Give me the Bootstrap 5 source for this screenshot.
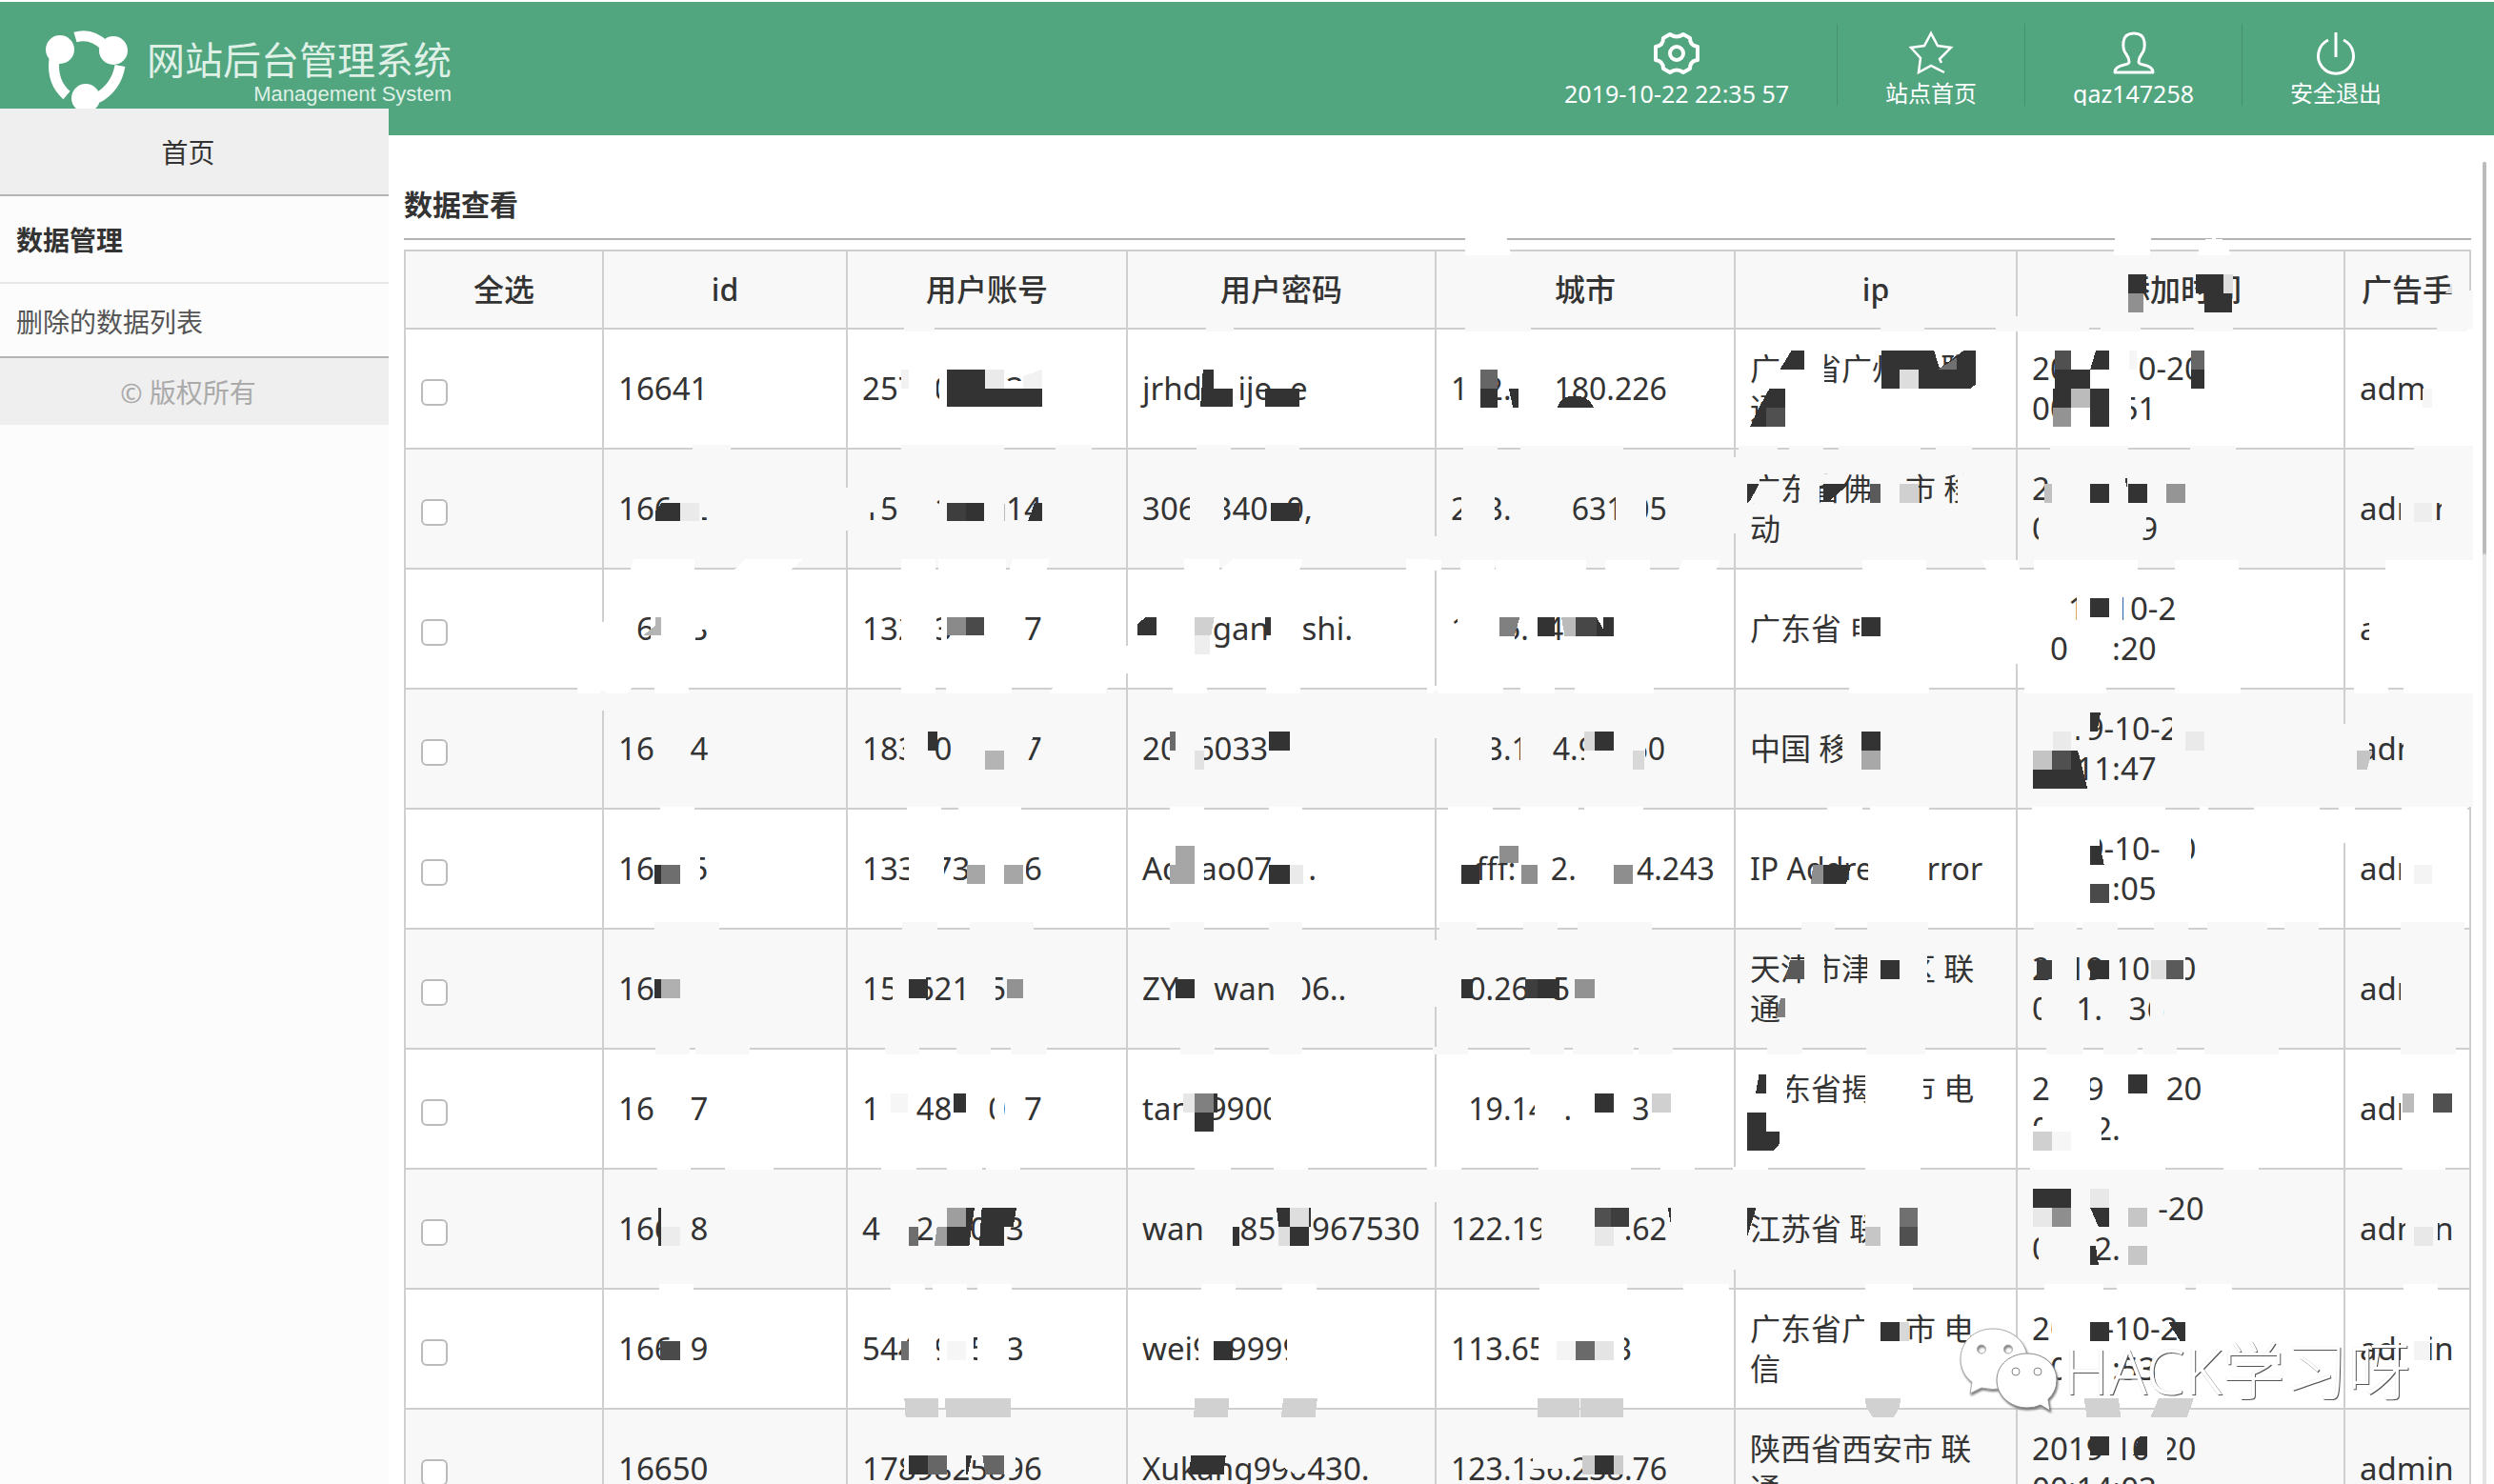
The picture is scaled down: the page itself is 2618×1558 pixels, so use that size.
<!DOCTYPE html>
<html lang="zh-CN">
<head>
<meta charset="utf-8">
<meta name="viewport" content="width=device-width, initial-scale=1">
<title>网站后台管理系统</title>
<link href="https://cdn.jsdelivr.net/npm/bootstrap@5.3.0/dist/css/bootstrap.min.css" rel="stylesheet">
<style>
body{font-family:"Noto Sans","Noto Sans CJK SC",sans-serif;color:#333;background:#fff}
a{color:inherit;text-decoration:none}
.topbar{height:142px;border-top:2px solid #fff;background:#51a57f;color:#fff;padding-right:68px}
.brand-area{padding-left:46px}
.brand-mark{width:90px;height:90px;margin-top:27px}
.brand-words{margin-top:33px;margin-left:18px;color:#dff0e7;text-align:right}
.brand-cn{font-size:40px;line-height:56px;font-weight:400}
.brand-en{font:22px/16px "Liberation Sans",sans-serif}
.tool-item{height:86px;margin-top:23px;padding:0 50px;border-right:1px solid #46916f;font-size:24px;line-height:32px;overflow:hidden}
.tool-item:last-child{border-right:0}
.tool-latin{font-size:25px}
.tool-item svg{width:48px;height:48px;margin:7px 0 2px;flex-shrink:0;fill:none;stroke:#fff;stroke-width:3}
.sidebar{width:408px;margin-top:-28px;background:#fcfcfc;z-index:2;font-size:28px}
.sidebar a,.copy-note{display:block;padding:0 17px}
.nav-home{height:92px;line-height:92px;background:#efefef;border-bottom:2px solid #b3b3b3;text-align:center;padding-right:30px!important}
.nav-group{height:92px;line-height:92px;border-bottom:2px solid #e8e8e8;font-weight:700}
.nav-sub{height:78px;line-height:80px;border-bottom:2px solid #b3b3b3;color:#555}
.copy-note{height:70px;line-height:72px;background:#efefef;color:#aaa;text-align:center;padding-right:30px!important}
.content-area{padding:28px 8px 0 16px}
.main-panel{padding-right:12px}
.panel-title{font-size:30px;line-height:90px;height:82px;margin:0;border-bottom:2px solid #b3b3b3;font-weight:700}
.records{width:100%;margin-top:10px;table-layout:fixed;border-collapse:separate;border-spacing:0;border:solid #cfcfcf;border-width:2px 0 0 2px;font-size:33px;line-height:42px}
.records th,.records td{border:solid #cfcfcf;border-width:0 2px 2px 0;padding:0 14px 0 15px;white-space:nowrap}
.records th{height:82px;text-align:center;font-size:32px;font-weight:500;background:#f8f8f8;padding:0 15px}
.records th:last-child{padding:0}
.records td{height:126px}
.records td:nth-child(5){font-size:32px}
.records td:nth-child(6){white-space:normal;font-size:32px;padding-right:24px}
.records tbody tr:nth-child(even){background:#f8f8f8}
.records input{appearance:none;display:block;width:28px;height:28px;margin:8px 0 0 1px;border:2px solid #bbb;border-radius:6px;background:#fff}
.scroll-rail{width:4px;background:#e4e4e4}
.scroll-grip{height:412px;background:#bbb;border-radius:2px}
.mosaic{position:absolute;left:0;top:0;width:2194px;height:1388px;pointer-events:none;shape-rendering:crispEdges}
.mosaic .w{fill:#fff}.mosaic .s{fill:#f8f8f8}.mosaic .k{fill:#333}.mosaic .l{fill:#d1d1d1}
.wm{position:absolute;left:1632px;top:1222px;gap:2px;font-size:66px;line-height:80px;font-weight:300;color:#fff;text-shadow:1px 1px 0 #555,0 0 1px #ccc;white-space:nowrap;pointer-events:none}
.wm svg{width:108px;height:92px;filter:drop-shadow(1px 2px 1px #777)}
</style>
<script src="https://cdn.jsdelivr.net/npm/bootstrap@5.3.0/dist/js/bootstrap.bundle.min.js"></script>
</head>
<body>
<div class="vh-100 d-flex flex-column overflow-hidden">
<header class="topbar d-flex justify-content-between flex-shrink-0">
  <a href="#" class="brand-area d-flex">
    <svg class="brand-mark" viewBox="46 29 90 90"><g fill="none" stroke="#fff" stroke-width="11"><path d="M57 62Q54 86 70 100"/><path d="M79 39Q96 34 110 48"/><path d="M126 69Q122 92 102 103"/></g><g fill="#fff"><circle cx="63" cy="52" r="15"/><circle cx="119" cy="53" r="15"/><circle cx="90" cy="103" r="15"/></g></svg>
    <span class="brand-words"><span class="brand-cn d-block">网站后台管理系统</span><span class="brand-en d-block">Management System</span></span>
  </a>
  <nav class="d-flex">
    <a href="#" class="tool-item tool-latin d-flex flex-column align-items-center"><svg viewBox="0 0 48 48"><path d="M17 4q7 5 14 0l7 4q0 8 8 9v14q-8 1-8 9l-7 4q-7-5-14 0l-7-4q0-8-8-9V17q8-1 8-9z" stroke-width="4" stroke-linejoin="round"/><circle cx="24" cy="24" r="7" stroke-width="4"/></svg>2019-10-22 22:35 57</a>
    <a href="#" class="tool-item d-flex flex-column align-items-center"><svg viewBox="0 0 48 48"><path d="M35 34l-2-4 12-12-14-2-7-13-7 13-14 2 10 11-2 15 13-7 14 7" stroke-width="2.5"/></svg>站点首页</a>
    <a href="#" class="tool-item tool-latin d-flex flex-column align-items-center"><svg viewBox="0 0 48 48"><path d="M19 33q0-4-3-8-4-5-3-13 1-9 11-9t11 9q1 8-3 13-3 4-3 8 0 2 5 3 10 2 10 8H4q0-6 10-8 5-1 5-3z" stroke-linejoin="round"/></svg>qaz147258</a>
    <a href="#" class="tool-item d-flex flex-column align-items-center"><svg viewBox="0 0 48 48"><path d="M24 2v26M16 10a18.500 18.500 0 1 0 16 0"/></svg>安全退出</a>
  </nav>
</header>
<div class="d-flex flex-grow-1">
  <aside class="sidebar flex-shrink-0 position-relative">
    <a href="#" class="nav-home">首页</a>
    <a href="#" class="nav-group">数据管理</a>
    <a href="#" class="nav-sub">删除的数据列表</a>
    <div class="copy-note">© 版权所有</div>
  </aside>
  <div class="content-area d-flex flex-grow-1">
  <main class="main-panel flex-grow-1 position-relative">
    <h1 class="panel-title">数据查看</h1>
    <table class="records">
      <colgroup><col style="width:208px"><col style="width:256px"><col style="width:294px"><col style="width:324px"><col style="width:314px"><col style="width:296px"><col style="width:344px"><col style="width:132px"></colgroup>
      <thead><tr><th>全选</th><th>id</th><th>用户账号</th><th>用户密码</th><th>城市</th><th>ip</th><th>添加时间</th><th>广告手</th></tr></thead>
      <tbody>
      <tr><td><input type="checkbox" aria-label="16641"></td><td>16641</td><td>257&numsp;0&numsp;&numsp;&numsp;3</td><td>jrhd&numsp;&numsp;ije&numsp;e</td><td>1&numsp;2.&numsp;&numsp;&nbsp;180.226</td><td>广东省广州市 联通</td><td>20&numsp;&numsp;&nbsp;&nbsp;10-20<br>00&nbsp;&numsp;&numsp;&nbsp;51</td><td>adm</td></tr>
      <tr><td><input type="checkbox" aria-label="16642"></td><td>166&numsp;2</td><td>15&numsp;&numsp;1&numsp;&numsp;&numsp;14</td><td>306&numsp;340&numsp;0,</td><td>2&numsp;3.&numsp;&numsp;&numsp;&nbsp;631.05</td><td>广东省佛&nbsp;&numsp;&nbsp;市 移动</td><td>2<br>0&numsp;&numsp;&numsp;&numsp;&numsp;9</td><td>admin</td></tr>
      <tr><td><input type="checkbox" aria-label="16643"></td><td>16&numsp;&numsp;3</td><td>132&numsp;3&numsp;&numsp;&numsp;&numsp;7</td><td>&numsp;&numsp;&numsp;&nbsp;&nbsp;ganw&nbsp;shi.</td><td>1&numsp;&numsp;5.&numsp;4</td><td>广东省 电</td><td>&numsp;&numsp;1&numsp;&nbsp;10-2<br>&numsp;0&numsp;&numsp;&nbsp;:20</td><td>a</td></tr>
      <tr><td><input type="checkbox" aria-label="16644"></td><td>16&numsp;&numsp;4</td><td>183&numsp;0&numsp;&numsp;&numsp;&numsp;7</td><td>20&numsp;6033</td><td>&numsp;&numsp;3.1&nbsp;&nbsp;&nbsp;4.9&numsp;&numsp;60</td><td>中国 移</td><td>&numsp;&numsp;19-10-2<br>&numsp;&numsp;&nbsp;11:47</td><td>adm</td></tr>
      <tr><td><input type="checkbox" aria-label="16645"></td><td>16&numsp;&numsp;5</td><td>133&numsp;73&numsp;&numsp;&numsp;6</td><td>Ad&numsp;ao07&numsp;&numsp;.</td><td>&numsp;&nbsp;fff:&numsp;&numsp;2.&numsp;&numsp;&numsp;&nbsp;4.243</td><td>IP Address Error</td><td>&numsp;&numsp;&numsp;9-10-&numsp;0<br>&numsp;&numsp;&numsp;&numsp;&nbsp;:05</td><td>adm</td></tr>
      <tr><td><input type="checkbox" aria-label="16646"></td><td>16</td><td>15&numsp;621&numsp;5</td><td>ZY&numsp;&numsp;wan&numsp;06..</td><td>&numsp;0.26&nbsp;&nbsp;&nbsp;5</td><td>天津市津&nbsp;&numsp;&nbsp;区 联通</td><td>2019-10-20<br>0&numsp;&nbsp;1.&numsp;&nbsp;36</td><td>adm</td></tr>
      <tr><td><input type="checkbox" aria-label="16647"></td><td>16&numsp;&numsp;7</td><td>1&numsp;&numsp;48&numsp;&numsp;0&numsp;7</td><td>tan&numsp;9900</td><td>119.14&numsp;.&numsp;&numsp;&numsp;&nbsp;3</td><td>广东省揭&nbsp;&numsp;&nbsp;市 电<br>&nbsp;</td><td>2&numsp;&numsp;9&numsp;&numsp;&numsp;&nbsp;20<br>0&numsp;&numsp;&nbsp;2.</td><td>adm</td></tr>
      <tr><td><input type="checkbox" aria-label="16648"></td><td>166&numsp;8</td><td>4&numsp;&numsp;2&numsp;&numsp;0&numsp;3</td><td>wan&numsp;&numsp;85&numsp;&numsp;967530</td><td>122.19&numsp;&numsp;&numsp;&numsp;&nbsp;.62</td><td>江苏省 联</td><td>&numsp;&numsp;&numsp;&numsp;&numsp;&numsp;&numsp;-20<br>0&numsp;&numsp;&nbsp;2.</td><td>admin</td></tr>
      <tr><td><input type="checkbox" aria-label="16649"></td><td>166&numsp;9</td><td>544&numsp;9&numsp;5&numsp;3</td><td>wei9&numsp;9999</td><td>113.65&numsp;&numsp;&numsp;&nbsp;&nbsp;3</td><td>广东省广&nbsp;&numsp;&nbsp;市 电信</td><td>20&numsp;&numsp;-10-2<br>00&numsp;&numsp;&nbsp;:53</td><td>admin</td></tr>
      <tr><td><input type="checkbox" aria-label="16650"></td><td>16650</td><td>1789825896</td><td>Xukang990430.</td><td>123.136.238.76</td><td>陕西省西安市 联通</td><td>2019-10-20<br>00:14:03</td><td>admin</td></tr>
      </tbody>
    </table>
    <!-- redaction blocks laid over the table -->
    <svg class="mosaic" viewBox="424 170 2194 1388" aria-hidden="true">
      <g transform="translate(400 180) scale(.7015 .3571)">
        <path class="s" d="M783 455h45v15h-45zM1235 455h41v15h-41zM466 804h57v18h-57zM778 804h154v18h-154zM1009 804h54v18h-54zM1220 804h52v18h-52zM1323 804h51v18h-51zM694 930h7v125h-7z"/>
        <path class="w" d="M778 638h53v60h-53zM790 580h41v60h-41zM835 580h12v120h-12zM932 617h29v21h-29z"/>
        <path fill="#f2f2f2" d="M779 582h11v56h-11zM961 602L989 582v56h-28z"/><path fill="#eaeaea" d="M904 582h28v56h-28zM448 974h28v55h-28z"/>
        <path class="k" d="M847 582h57v56h85v55h-142zM1230 582h16v56h28v55h-48zM1323 638h51v55h-51z"/>
        <path class="s" d="M476 940h14v72h-14zM476 1000h4v35h-4zM455 940h40v34h-40zM718 945h42l-24 58h-18zM773 940h58v90h-58zM835 940h12v90h-12zM1210 940h52v95h-52z"/>
        <path class="k" d="M420 974h28v55h-37v-30zM875 974h28v55h-28zM978 974h11v55h-21zM1331 974h43v55h-43z"/><path fill="#3e3e3e" d="M847 974h28v55h-28z"/><path fill="#bbb" d="M932 978h2v50h-2z"/>
        <path class="w" d="M378 1140h91v34h-97zM545 1140h87l-20 34h-85zM778 1140h51v34h-51zM834 1140h101v34h-101zM945 1140h55l-4 34h-56zM1202 1140h52v34h-52zM1275 1140h104l-5 34h-120zM1534 1140h34v34h-34zM328 1325h9v260h-9zM1112 1395h9v80h-9z"/>
        <path class="w" d="M355 1290h26v95h-26zM404 1295h86v45l-20 18v27h-66zM778 1290h53v95h-53zM838 1290h9v95h-9zM1331 1290h40v95h-40z"/>
        <path fill="#b4b4b4" d="M410 1310h9v55h-27l18-30z"/><path class="k" d="M1145 1310h16v55h-29v-35zM1323 1310h8v55h-8z"/><path fill="#8a8a8a" d="M847 1310h28v55h-28z"/><path fill="#4a4a4a" d="M875 1310h28v55h-28z"/><path fill="#d0d0d0" d="M1217 1310h30l-5 55h-25z"/><path fill="#eee" d="M1217 1365h23v55h-23z"/>
      </g>
      <g transform="translate(400 700) scale(.7015 .3333)">
        <path class="w" d="M294 62h83l-8 22h-75zM409 62h51v22h-51zM778 62h51v22h-51zM846 62h98v22h-98zM1008 62h80l-4 22h-86zM1185 62h51v22h-51zM1324 62h52v22h-52zM418 440h51v14h-51zM787 440h51v14h-51zM864 440h94v14h-94zM1180 440h52v14h-52zM1328 440h51v14h-51z"/>
        <path class="s" d="M328 74h9v64h-9zM409 804h97v26h-97zM780 804h52v26h-52zM881 804h96v26h-96zM1180 804h52v26h-52zM1328 804h51v26h-51zM411 1196h51v26h-51zM470 1196h82v26h-82zM754 1196h52v26h-52zM861 1196h51v26h-51zM942 1196h54v26h-54zM1196 1196h51v26h-51zM1328 1196h51v26h-51z"/>
        <path class="s" d="M782 200h36v120h-36zM950 200h30l-12 60v25h-18zM1180 200h51v120h-51z"/>
        <path class="k" d="M818 204h14v60h-14zM1328 204h32v60h-32z"/><path fill="#b4b4b4" d="M904 264h28v60h-28z"/><path fill="#6a6a6a" d="M1180 204h9v60h-9z"/><path fill="#e2e2e2" d="M1217 264h14v60h-14z"/>
        <path class="w" d="M448 580h30v110h-30zM790 580h52v110h-52zM955 580h10v110h-10zM1180 580h51v110h-51z"/>
        <path class="k" d="M409 624h10v60h-10zM1329 624h31v60h-31z"/><path fill="#6e6e6e" d="M419 624h29v60h-29z"/><path fill="#a6a6a6" d="M877 624h27v60h-27zM932 624h29v60h-29zM1189 564h28v60h-28zM1180 624h37v60h-37z"/><path fill="#eaeaea" d="M1360 624h20v60h-20z"/>
        <path class="s" d="M765 960h50v100h-50zM873 960h47v100h-47zM1350 960h28v100h-28z"/>
        <path class="k" d="M409 984h10v60h-10zM790 984h28v60h-28zM1189 984h28v60h-28z"/><path fill="#b0b0b0" d="M419 984h29v60h-29z"/><path fill="#929292" d="M936 984h25v60h-25z"/>
      </g>
      <g transform="translate(400 1120) scale(.7015 .3333)">
        <path class="w" d="M413 316h51v8h-51zM515 316h73v8h-73zM749 316h52v8h-52zM847 316h53v8h-53zM905 316h52v8h-52zM1218 316h53v8h-53zM1335 316h52v8h-52zM416 684h52v18h-52zM762 684h52v18h-52zM825 684h52v18h-52zM892 684h51v18h-51zM1227 684h51v18h-51zM1349 684h51v18h-51z"/>
        <path class="w" d="M918 80h14v110h-14zM1202 80h44v100h-44zM1331 80h20v110h-20zM790 840h41v100h-41zM836 840h51v100h-51zM892 840h48v100h-48zM1223 840h23v100h-23zM1355 840h30v100h-30z"/>
        <path fill="#f6f6f6" d="M762 84h27v60h-27zM847 864h28v60h-28z"/><path fill="#e6e6e6" d="M1200 84h17v60h-17z"/><path fill="#808080" d="M1217 84h29v60h-29z"/>
        <path class="k" d="M857 84h18v60h-18zM1246 84h5v60h-5zM1217 144h29v60h-29zM415 444h4v120h-4z"/>
        <path class="s" d="M419 450h40v114h-40z"/><path fill="#ececec" d="M419 504h29v60h-29z"/><path fill="#6e6e6e" d="M790 504h14v60h-14zM779 864h11v60h-11z"/><path fill="#9e9e9e" d="M847 444h28v60h-28zM832 504h15v60h-19z"/><path fill="#dedede" d="M1360 444h28v60h-28zM1343 504h17v60h-17z"/>
        <path class="k" d="M875 444h13l-8 120h-33v-60h28zM899 444h52l-5 60h-14v60h-37zM1274 504h10v60h-10zM1340 444h20v60h-17zM1360 504h28v60h-28zM1388 444h4v60h-4zM1246 864h28v60h-28z"/><path fill="#4a4a4a" d="M417 864h31v60h-31z"/>
        <path class="l" d="M783 1044h51v60h-49zM844 1044h98v60h-97zM1218 1044h51l-2 60h-51zM1350 1044h51l-3 60h-51z"/>
        <path class="s" d="M782 1220h60v64h-60zM847 1220h28v50h-28zM884 1220h20v20h-20zM932 1220h17v64h-17zM1340 1215h45v65h-20l-25-30z"/>
        <path class="k" d="M790 1224h28v60h-28zM875 1224h9l-6 60h-3zM1212 1224h52l-3 60h-52z"/><path fill="#666" d="M818 1224h29v60h-29zM900 1224h32v60h-28z"/>
      </g>
      <g transform="translate(1480 220) scale(.7258 .3333)">
        <path class="w" d="M80 85h60l6 60h-66zM1020 85h52l-2 59h-52zM1145 98q18-14 36 0l6 46h-48z"/>
        <path class="s" d="M80 368h95v16h-95zM680 368h64v16h-64zM847 368h135v16h-135zM999 368h58v16h-58zM1134 368h56v16h-56zM1485 368h50v16h-50zM874 335h8v36h-8zM1024 200h15v125h-15zM684 278h20v40h-20z"/>
        <path class="k" d="M1039 204h26v60h-26zM1137 204h39v60h13v60h-40v-60h-12z"/><path fill="#909090" d="M1039 264h22v60h-22z"/><path fill="#ddd" d="M1177 204h13v60h-13zM1497 264l10-30v30z"/>
        <path class="w" d="M1529 376h9v368h-9zM1529 1104h9v420h-9z"/><path class="s" d="M1529 255h9v121h-9zM1529 744h9v360h-9z"/>
        <path class="w" d="M535 440h65v122h-65zM956 624h28v62h-28zM1011 440h40v130h-40zM1011 570h32v120h-32zM535 564h8v120h-8z"/>
        <path fill="#666" d="M102 504h25v60h-25zM1130 444h19v60h-19z"/><path fill="#505050" d="M933 444h23v60h-23zM515 624h28v60h-28z"/>
        <path class="k" d="M102 564h25v60h-25zM143 564h14v60h-8zM213 624q5-37 25-37q20 0 28 37zM552 444h18v60h-35zM682 444h76l8 56 35-56h17v108l-8 12h-128zM520 564h23v60h-28v60h-23l13-60zM992 444h19v60h-27zM933 504h51v60h-28v60h-26v-60h3zM984 564h27v120h-27zM1130 504h19v60h-19z"/>
        <path fill="#ddd" d="M708 504h28v60h-28z"/><path fill="#707070" d="M764 504l27-38v38z"/><path fill="#bbb" d="M956 564h28v60h-28z"/><path fill="#939393" d="M930 624h26v60h-26z"/><path fill="#f6f6f6" d="M1465 564h14v60h-14zM1040 444h11v60h-11z"/>
        <path class="s" d="M77 744h50v14h-50zM160 744h149v14h-149zM475 744h57v14h-57zM549 744h49v14h-49zM620 744h119v14h-119zM761 744h52v14h-52zM926 744h113v14h-113zM1128 744h67v14h-67zM1452 744h77v14h-77zM465 780h8v240h-8zM34 1030h8v75h-8z"/>
        <path class="s" d="M75 900h48v90h-48zM297 900h45v90h-45zM488 835h17v90h-17zM563 835h30v100h-30zM590 835h38v30h-38zM792 835h26v100h-26zM910 960h22v90h-22zM1045 960h20v60h-20zM1433 900h51v90h-51zM1492 900h24v90h-24z"/>
        <path class="k" d="M488 864h17l-12 50-5 10zM598 864h37l-30 58h-7zM984 864h27v60h-27zM1039 864h27v60h-27zM1034 846l4 0v40z"/><path fill="#5a5a5a" d="M665 864h16v60h-16z"/><path fill="#d0d0d0" d="M708 864h28v60h-28z"/><path fill="#c0c0c0" d="M917 864h12v60h-12z"/><path fill="#959595" d="M1094 864h28v60h-28z"/><path fill="#eee" d="M1452 924h27v60h-27z"/>
        <path class="w" d="M-5 1104h50v32h-50zM73 1104h49v32h-49zM124 1104h131v32h-131zM283 1104h64v32h-64zM395 1104h54l-6 32h-55zM655 1104h92v32h-92zM827 1104h52l3 32h-48zM902 1104h150v32h-150zM1106 1104h93v32h-93zM1411 1104h124v32h-124zM25 1500h110v24h-110zM160 1500h49v24h-49zM239 1500h114v24h-114zM635 1500h116v24h-116zM889 1500h118v24h-118zM1106 1500h96v24h-96zM1365 1500h50v24h-50zM1437 1500h98v24h-98zM874 1134h8v296h-8z"/>
        <path class="w" d="M69 1270h82v95h-82zM650 1265h34v110h-34zM964 1215h66v85h-66zM900 1340h20v90h-20zM1388 1270h30v95h-30z"/>
        <path fill="#808080" d="M130 1284h29l-8 60h-21z"/><path fill="#bbb" d="M219 1284h21v60h-16z"/><path fill="#474747" d="M240 1284h30v60h-30z"/><path class="k" d="M185 1284h24v60h-24zM270 1284l10 40v-40h15v60h-25zM653 1284h28v60h-28zM984 1224h27v60h-27z"/>
      </g>
      <g transform="translate(1480 700) scale(.7258 .3333)">
        <path class="s" d="M34 75h8v150h-8zM1347 180h8v264h-8zM1529 84h9v356h-9z"/><path class="w" d="M1347 450h8v105h-8z"/>
        <path class="s" d="M110 200h9v110h-9zM160 200h17v110h-17zM252 200h88v110h-88zM626 200h20v120h-20zM950 150h34v70h-34zM1102 150h14v100h-14zM1370 200h18v110h-18zM1437 200h45v110h-45z"/>
        <path class="k" d="M267 204h28v60h-28zM653 204h28v60h-28zM984 144h15l-5 60h-10zM956 264h10l14 119h-79v-59h55z"/><path fill="#d8d8d8" d="M252 204h15v60h-15zM322 264h17v60h-17z"/><path fill="#a8a8a8" d="M653 264h28v60h-28z"/><path fill="#eaeaea" d="M1122 204h27v60h-27zM930 204h26v60h-26z"/><path fill="#c4c4c4" d="M901 264h28v60h-28zM1370 264h22l-8 60h-14z"/><path fill="#505050" d="M929 264h27v60h-27z"/>
        <path class="w" d="M55 440h65v13h-65zM160 440h84v13h-84zM252 440h85v13h-85zM604 440h51v13h-51zM665 440h86v13h-86zM900 440h192v13h-192zM1142 440h12v13h-12zM1221 440h95v13h-95zM1343 440h24v13h-24zM1434 440h96v13h-96z"/>
        <path class="w" d="M663 580h87v110h-87zM975 530h23v90h-23zM1108 530h22v95h-22zM1433 580h50v110h-50z"/>
        <path class="k" d="M75 624h26v60h-26zM598 624h40l-7 60h-33zM984 564h14l6 60h-20z"/><path fill="#8e8e8e" d="M130 564h27v54h-27zM161 624h24v60h-24zM295 624h27v60h-27zM583 624h15v60h-18z"/><path fill="#4a4a4a" d="M984 684h27v60h-27z"/><path fill="#f4f4f4" d="M1452 624h27v60h-27z"/>
        <path class="s" d="M43 804h53v26h-53zM164 804h49v26h-49zM242 804h108v26h-108zM566 804h49v26h-49zM662 804h88v26h-88zM903 804h61v26h-61zM973 804h51v26h-51zM1076 804h50v26h-50zM1153 804h87v26h-87zM1265 804h50v26h-50zM1433 804h92v26h-92zM33 1196h51v26h-51zM174 1196h49v26h-49zM236 1196h88v26h-88zM330 1196h50v26h-50zM516 1196h51v26h-51zM660 1196h85v26h-85zM921 1196h53v26h-53zM1003 1196h50v26h-50zM1059 1196h50v26h-50zM1149 1196h108v26h-108zM1433 1196h80v26h-80zM34 860h8v210h-8z"/>
        <path class="s" d="M570 905h30v100h-30zM661 905h87v100h-87zM929 905h36v95h-36zM1011 905h16v95h-16zM1072 905h50v95h-50zM913 1035h20v90h-20zM1026 1035h12v90h-12zM1070 1035h20v90h-20zM1433 960h50v100h-50zM535 1035h12v95h-12z"/>
        <path class="k" d="M75 984h16v60h-16zM185 984h31v60h-31zM681 924h27v60h-27zM984 924h27v60h-27z"/><path fill="#3e3e3e" d="M167 984h18v60h-18zM907 924h22v60h-22z"/><path fill="#929292" d="M239 984h28v60h-28z"/><path fill="#5a5a5a" d="M550 924h20v60h-27zM1094 924h25v60h-25z"/><path fill="#7f7f7f" d="M536 1044h7v60h-14z"/><path fill="#e0e0e0" d="M1072 924h22v60h-22z"/>
      </g>
      <g transform="translate(1480 1120) scale(.7258 .3333)">
        <path class="w" d="M25 316h50v8h-50zM186 316h134v8h-134zM362 316h50v8h-50zM467 316h51v8h-51zM658 316h81v8h-81zM897 316h195v8h-195zM1177 316h50v8h-50zM1435 316h63v8h-63zM187 684h127v18h-127zM395 684h66v18h-66zM658 684h69v18h-69zM918 684h85v18h-85zM1022 684h100v18h-100zM1137 684h52v18h-52zM1437 684h50v18h-50z"/>
        <path class="s" d="M34 325h8v100h-8zM465 325h8v315h-8z"/>
        <path class="w" d="M60 85h18v90h-18zM78 85h9v65h-9zM180 85h24v90h-24zM490 20h55v110h-55zM659 20h83v110h-83zM975 25h9v90h-9zM915 150h41v55h-41zM900 185h56v80h-56zM986 150h14v90h-14zM1433 85h50v90h-50z"/>
        <path class="k" d="M267 84h28v60h-28zM505 24h10v60h-15zM488 144h27v60h19v40l-8 20h-38zM1039 24h27v60h-27z"/><path fill="#d0d0d0" d="M350 84h28v60h-28zM901 204h28v60h-28z"/><path fill="#f6f6f6" d="M929 204h27v60h-27z"/><path fill="#bbb" d="M1435 84h17v60h-17z"/><path fill="#505050" d="M1480 84h27v60h-27z"/>
        <path class="s" d="M190 460h20v95h-20zM658 460h26v105h-26zM910 530h22v95h-22zM1440 460h47v95h-47z"/>
        <path class="k" d="M373 444h5v60zM488 444h13l-13 90zM901 384h55v60h-55zM984 444h27v60h-15zM984 564h8l4 60h-12z"/><path fill="#505050" d="M267 444h24v60h-24zM708 504h26v60h-26z"/><path fill="#3e3e3e" d="M291 444h26v60h-26z"/><path fill="#e8e8e8" d="M267 504h28v60h-28zM901 444h28v60h-28zM984 384h27v60h-27zM1452 504h28v60h-28z"/><path fill="#707070" d="M708 444h27v60h-27z"/><path fill="#8e8e8e" d="M929 444h27v60h-27z"/><path fill="#c6c6c6" d="M658 504h23v60h-23zM1039 444h27v60h-27zM1039 564h27v60h-27z"/>
        <path class="w" d="M186 840h24v95h-24zM295 840h15v95h-15zM657 780h24v105h-24zM929 780h30v95h-30zM943 905h70v100h-70zM1433 840h43v95h-43z"/>
        <path class="k" d="M681 804h27v60h-27zM984 804h27v60h-27zM1097 804h25v60h-8z"/><path fill="#6a6a6a" d="M240 864h27v60h-27z"/><path fill="#e4e4e4" d="M267 864h28v60h-28z"/><path fill="#d8d8d8" d="M708 804h14v60h-14z"/><path fill="#f4f4f4" d="M212 864h28v60h-28zM1452 864h24v60h-24z"/>
        <path class="l" d="M185 1044h60v60h-60zM247 1044h62v60h-62zM658 1044h52l-2 30-8 30h-30l-10-30zM975 1044h50l3 60h-49zM1083 1044h51l-10 60h-53z"/>
        <path class="s" d="M178 1225h58v40h-58zM1011 1160h20v90h-20zM1066 1160h30v90h-30z"/><path fill="#ccc" d="M250 1224h58v60h-58z"/><path class="k" d="M267 1224h28v60h-28zM984 1164h27v60h-27zM1055 1164h11v60h-20z"/>
      </g>
    </svg>
    <div class="wm d-flex align-items-center"><svg viewBox="0 0 108 92" fill="#fff"><path fill-rule="evenodd" d="M36 3C16 3 2 17 2 35c0 10 5 19 12 24l-2 12 12-6q12 3 24 0 22-8 24-30C72 17 56 3 36 3zM24 20a4 4 0 1 1 0 9 4 4 0 1 1 0-9zM52 20a4 4 0 1 1 0 9 4 4 0 1 1 0-9z" stroke="#aaa" stroke-width="1"/><path d="M72 29c-18 0-32 12-32 28s14 29 32 29q8 0 14-3l10 6-2-12q9-8 9-20c0-16-13-28-31-28z" stroke="#888" stroke-width="1"/><circle cx="60" cy="48" r="4" stroke="#888"/><circle cx="83" cy="48" r="4" stroke="#888"/></svg>HACK学习呀</div>
  </main>
  <div class="scroll-rail flex-shrink-0"><div class="scroll-grip"></div></div>
  </div>
</div>
</div>
</body>
</html>
